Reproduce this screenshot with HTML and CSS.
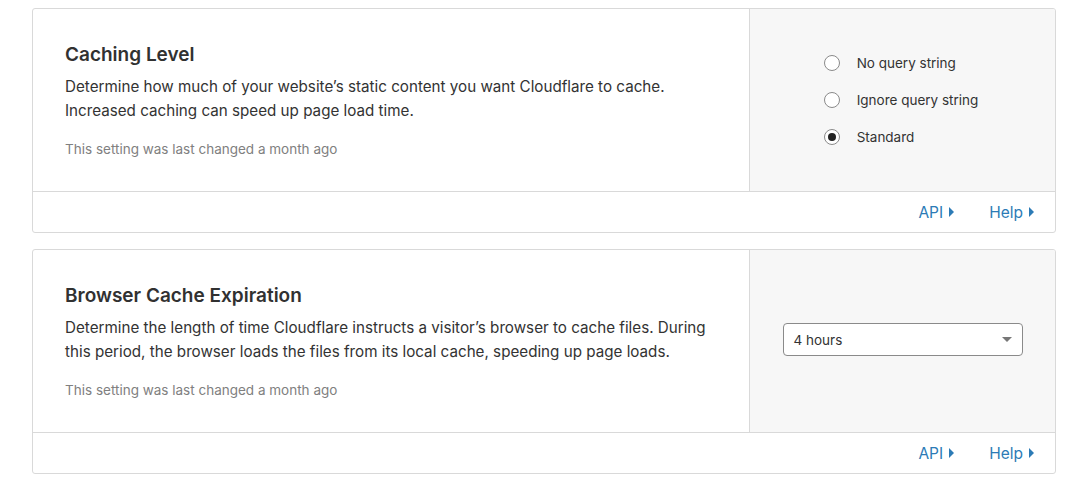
FILE: index.html
```html
<!DOCTYPE html>
<html>
<head>
<meta charset="utf-8">
<link rel="stylesheet" href="styles.css">
</head>
<body>
<div class="page">
  <section class="card">
    <div class="card-main">
      <div class="info">
        <h3 class="title">Caching Level</h3>
        <p class="desc">Determine how much of your website’s static content you want Cloudflare to cache. Increased caching can speed up page load time.</p>
        <p class="meta">This setting was last changed a month ago</p>
      </div>
      <div class="control">
        <div class="radios">
          <label class="radio"><span class="dot"></span><span>No query string</span></label>
          <label class="radio"><span class="dot"></span><span>Ignore query string</span></label>
          <label class="radio"><span class="dot checked"></span><span>Standard</span></label>
        </div>
      </div>
    </div>
    <div class="card-foot">
      <a class="link">API<span class="tri"></span></a>
      <a class="link">Help<span class="tri"></span></a>
    </div>
  </section>
  <section class="card">
    <div class="card-main">
      <div class="info">
        <h3 class="title">Browser Cache Expiration</h3>
        <p class="desc">Determine the length of time Cloudflare instructs a visitor’s browser to cache files. During this period, the browser loads the files from its local cache, speeding up page loads.</p>
        <p class="meta">This setting was last changed a month ago</p>
      </div>
      <div class="control">
        <div class="select"><span>4 hours</span><span class="caret"></span></div>
      </div>
    </div>
    <div class="card-foot">
      <a class="link">API<span class="tri"></span></a>
      <a class="link">Help<span class="tri"></span></a>
    </div>
  </section>
</div>
</body>
</html>
```

FILE: styles.css
```css
* { box-sizing: border-box; }
html, body { margin: 0; padding: 0; background: #fff; }
body {
  font-family: Inter, "Noto Sans", sans-serif;
  color: #333;
  -webkit-font-smoothing: antialiased;
}
.page {
  padding: 8px 14px 0 32px;
  display: flex;
  flex-direction: column;
  gap: 16px;
}
.card {
  border: 1px solid #d9d9d9;
  border-radius: 3px;
  overflow: hidden;
  width: 1024px;
}
.card-main {
  display: grid;
  grid-template-columns: 1fr 306px;
  height: 183px;
  border-bottom: 1px solid #d9d9d9;
}
.info {
  padding: 33px 16px 0 32px;
}
.title {
  margin: 0;
  font-size: 19px;
  font-weight: 600;
  line-height: 26px;
  color: #313131;
}
.desc {
  margin: 7px 0 0;
  font-size: 15.2px;
  line-height: 24px;
  color: #333;
}
.meta {
  margin: 16px 0 0;
  font-size: 13.5px;
  line-height: 20px;
  color: #808080;
}
.control {
  background: #f7f7f7;
  border-left: 1px solid #d9d9d9;
  display: flex;
  align-items: center;
  justify-content: center;
}
.radios {
  display: flex;
  flex-direction: column;
  gap: 17px;
  margin-left: -3px;
}
.radio {
  display: flex;
  align-items: center;
  gap: 17px;
  font-size: 13.5px;
  line-height: 20px;
  color: #333;
}
.dot {
  width: 16px;
  height: 16px;
  border-radius: 50%;
  border: 1px solid #8a8a8a;
  background: #fff;
  position: relative;
}
.dot.checked::after {
  content: "";
  position: absolute;
  left: 3px; top: 3px;
  width: 8px; height: 8px;
  border-radius: 50%;
  background: #222;
}
.select {
  width: 240px;
  height: 33px;
  border: 1px solid #8a8a8a;
  border-radius: 4px;
  background: #fff;
  display: flex;
  align-items: center;
  justify-content: space-between;
  padding: 0 10px 0 10px;
  font-size: 13.5px;
  color: #333;
  margin-top: -3px;
}
.caret {
  width: 0; height: 0;
  border-left: 5px solid transparent;
  border-right: 5px solid transparent;
  border-top: 5px solid #777;
}
.card-foot {
  height: 40px;
  display: flex;
  justify-content: flex-end;
  align-items: center;
  gap: 35px;
  padding-right: 21px;
}
.link {
  color: #2c7bb6;
  font-size: 15.5px;
  display: flex;
  align-items: center;
  gap: 6px;
}
.tri {
  width: 0; height: 0;
  border-top: 5px solid transparent;
  border-bottom: 5px solid transparent;
  border-left: 5px solid #2c7bb6;
}
```
